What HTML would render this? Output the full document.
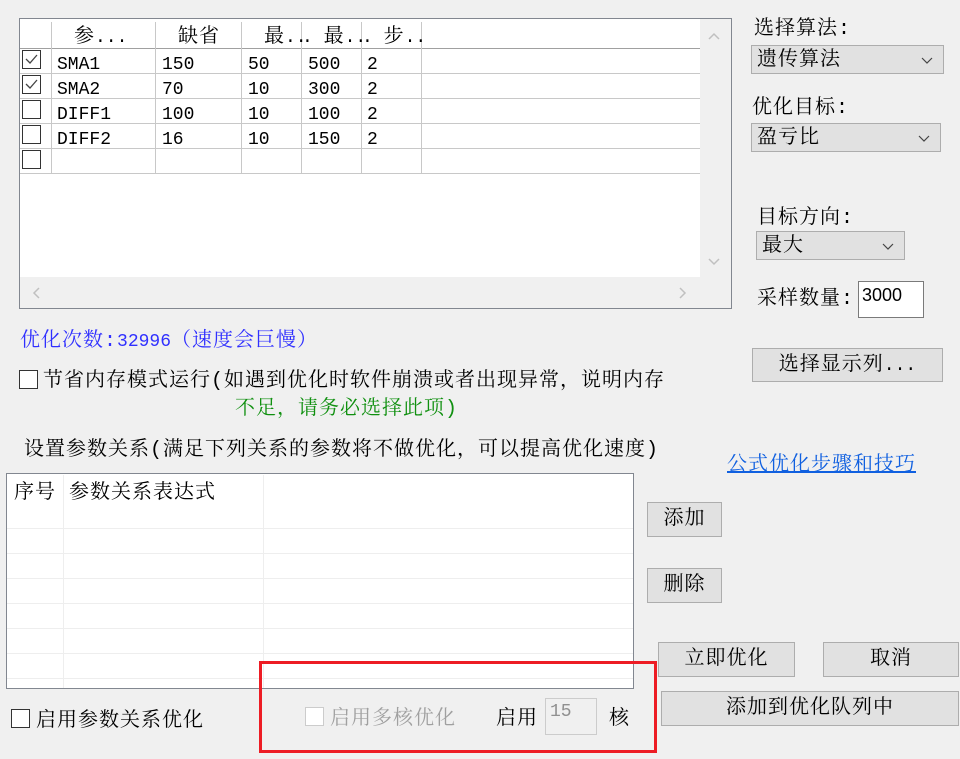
<!DOCTYPE html>
<html><head><meta charset="utf-8"><style>
*{box-sizing:border-box;margin:0;padding:0}
body{width:960px;height:759px;background:#f0f0f0;position:relative;overflow:hidden;font-family:"Liberation Mono","Noto Serif CJK SC",serif;font-size:20px;color:#000;letter-spacing:1px}
.a{position:absolute;white-space:nowrap;line-height:22px;margin-top:3px}
.g{font-size:18px;letter-spacing:0}
.btn{position:absolute;background:#e1e1e1;border:1px solid #adadad;text-align:center;font-size:20px;padding-top:3px}
.cb{position:absolute;width:19px;height:19px;border:1px solid #333;background:#fff}
.combo{position:absolute;background:#e1e1e1;border:1px solid #adadad;font-size:20px;padding-left:5px;padding-top:3px}
.combo svg{position:absolute;right:10px;top:11px}
.h{position:absolute;background:#c8c8c8}
</style></head><body>
<div style="position:absolute;left:19px;top:18px;width:713px;height:291px;border:1px solid #828790;background:#f0f0f0"></div>
<div style="position:absolute;left:20px;top:19px;width:680px;height:258px;background:#fff"></div>
<div class="h" style="left:20px;top:48px;width:680px;height:1px;background:#a0a0a0"></div>
<div class="h" style="left:20px;top:73px;width:680px;height:1px"></div>
<div class="h" style="left:20px;top:98px;width:680px;height:1px"></div>
<div class="h" style="left:20px;top:123px;width:680px;height:1px"></div>
<div class="h" style="left:20px;top:148px;width:680px;height:1px"></div>
<div class="h" style="left:20px;top:173px;width:680px;height:1px"></div>
<div class="h" style="left:51px;top:22px;width:1px;height:151px"></div>
<div class="h" style="left:155px;top:22px;width:1px;height:151px"></div>
<div class="h" style="left:241px;top:22px;width:1px;height:151px"></div>
<div class="h" style="left:301px;top:22px;width:1px;height:151px"></div>
<div class="h" style="left:361px;top:22px;width:1px;height:151px"></div>
<div class="h" style="left:421px;top:22px;width:1px;height:151px"></div>
<div class="a" style="left:74px;top:24px">参<span class="g">...</span></div>
<div class="a" style="left:178px;top:24px">缺省</div>
<div class="a" style="left:264px;top:24px">最<span class="g">..</span></div>
<div class="a" style="left:302px;top:24px"><span class="g">. </span>最<span class="g">..</span></div>
<div class="a" style="left:362px;top:24px"><span class="g">. </span>步<span class="g">..</span></div>
<div class="cb" style="left:22px;top:50px"><svg width="17" height="17"><polyline points="3,8 7,12 14,4" fill="none" stroke="#444" stroke-width="1.3"/></svg></div>
<div class="cb" style="left:22px;top:75px"><svg width="17" height="17"><polyline points="3,8 7,12 14,4" fill="none" stroke="#444" stroke-width="1.3"/></svg></div>
<div class="cb" style="left:22px;top:100px"></div>
<div class="cb" style="left:22px;top:125px"></div>
<div class="cb" style="left:22px;top:150px"></div>
<div class="a g" style="left:57px;top:51px">SMA1</div><div class="a g" style="left:162px;top:51px">150</div><div class="a g" style="left:248px;top:51px">50</div><div class="a g" style="left:308px;top:51px">500</div><div class="a g" style="left:367px;top:51px">2</div>
<div class="a g" style="left:57px;top:76px">SMA2</div><div class="a g" style="left:162px;top:76px">70</div><div class="a g" style="left:248px;top:76px">10</div><div class="a g" style="left:308px;top:76px">300</div><div class="a g" style="left:367px;top:76px">2</div>
<div class="a g" style="left:57px;top:101px">DIFF1</div><div class="a g" style="left:162px;top:101px">100</div><div class="a g" style="left:248px;top:101px">10</div><div class="a g" style="left:308px;top:101px">100</div><div class="a g" style="left:367px;top:101px">2</div>
<div class="a g" style="left:57px;top:126px">DIFF2</div><div class="a g" style="left:162px;top:126px">16</div><div class="a g" style="left:248px;top:126px">10</div><div class="a g" style="left:308px;top:126px">150</div><div class="a g" style="left:367px;top:126px">2</div>
<svg style="position:absolute;left:708px;top:32px" width="12" height="8"><polyline points="1,7 6,2 11,7" fill="none" stroke="#c0c0c0" stroke-width="1.5"/></svg>
<svg style="position:absolute;left:708px;top:258px" width="12" height="8"><polyline points="1,1 6,6 11,1" fill="none" stroke="#c0c0c0" stroke-width="1.5"/></svg>
<svg style="position:absolute;left:32px;top:287px" width="8" height="12"><polyline points="7,1 2,6 7,11" fill="none" stroke="#c0c0c0" stroke-width="1.5"/></svg>
<svg style="position:absolute;left:679px;top:287px" width="8" height="12"><polyline points="1,1 6,6 1,11" fill="none" stroke="#c0c0c0" stroke-width="1.5"/></svg>
<div class="a" style="left:754px;top:16px">选择算法:</div>
<div class="combo" style="left:751px;top:45px;width:193px;height:29px;line-height:24px">遗传算法<svg width="12" height="8"><polyline points="1,1 6,6 11,1" fill="none" stroke="#444" stroke-width="1.2"/></svg></div>
<div class="a" style="left:752px;top:95px">优化目标:</div>
<div class="combo" style="left:751px;top:123px;width:190px;height:29px;line-height:24px">盈亏比<svg width="12" height="8"><polyline points="1,1 6,6 11,1" fill="none" stroke="#444" stroke-width="1.2"/></svg></div>
<div class="a" style="left:757px;top:205px">目标方向:</div>
<div class="combo" style="left:756px;top:231px;width:149px;height:29px;line-height:24px">最大<svg width="12" height="8"><polyline points="1,1 6,6 11,1" fill="none" stroke="#444" stroke-width="1.2"/></svg></div>
<div class="a" style="left:757px;top:286px">采样数量:</div>
<div style="position:absolute;left:858px;top:281px;width:66px;height:37px;border:1px solid #7a7a7a;background:#fff;font-family:'Liberation Sans',sans-serif;font-size:18px;padding:3px 3px;letter-spacing:0">3000</div>
<div class="btn" style="left:752px;top:348px;width:191px;height:34px;line-height:28px">选择显示列<span class="g">...</span></div>
<div class="a" style="left:20px;top:328px;color:#3030ff">优化次数:<span class="g">32996</span>（速度会巨慢）</div>
<div class="cb" style="left:19px;top:370px"></div>
<div class="a" style="left:43px;top:368px">节省内存模式运行(如遇到优化时软件崩溃或者出现异常，说明内存</div>
<div class="a" style="left:235px;top:396px;color:#109010">不足，请务必选择此项)</div>
<div class="a" style="left:24px;top:437px">设置参数关系(满足下列关系的参数将不做优化，可以提高优化速度)</div>
<div class="a" style="left:727px;top:452px;color:#1060e0;text-decoration:underline">公式优化步骤和技巧</div>
<div style="position:absolute;left:6px;top:473px;width:628px;height:216px;border:1px solid #828790;background:#fff"></div>
<div class="h" style="left:7px;top:528px;width:626px;height:1px;background:#eee"></div>
<div class="h" style="left:7px;top:553px;width:626px;height:1px;background:#eee"></div>
<div class="h" style="left:7px;top:578px;width:626px;height:1px;background:#eee"></div>
<div class="h" style="left:7px;top:603px;width:626px;height:1px;background:#eee"></div>
<div class="h" style="left:7px;top:628px;width:626px;height:1px;background:#eee"></div>
<div class="h" style="left:7px;top:653px;width:626px;height:1px;background:#eee"></div>
<div class="h" style="left:7px;top:678px;width:626px;height:1px;background:#eee"></div>
<div class="h" style="left:63px;top:475px;width:1px;height:213px;background:#eee"></div>
<div class="h" style="left:263px;top:475px;width:1px;height:213px;background:#eee"></div>
<div class="a" style="left:14px;top:480px">序号</div>
<div class="a" style="left:69px;top:480px">参数关系表达式</div>
<div class="btn" style="left:647px;top:502px;width:75px;height:35px;line-height:28px">添加</div>
<div class="btn" style="left:647px;top:568px;width:75px;height:35px;line-height:28px">删除</div>
<div class="btn" style="left:658px;top:642px;width:137px;height:35px;line-height:28px">立即优化</div>
<div class="btn" style="left:823px;top:642px;width:136px;height:35px;line-height:28px">取消</div>
<div class="btn" style="left:661px;top:691px;width:298px;height:35px;line-height:28px">添加到优化队列中</div>
<div class="cb" style="left:11px;top:709px"></div>
<div class="a" style="left:36px;top:708px">启用参数关系优化</div>
<div class="cb" style="left:305px;top:707px;border-color:#ccc"></div>
<div class="a" style="left:330px;top:706px;color:#a0a0a0">启用多核优化</div>
<div class="a" style="left:496px;top:706px">启用</div>
<div style="position:absolute;left:545px;top:698px;width:52px;height:37px;border:1px solid #ccc;background:#f0f0f0;color:#909090;font-size:18px;padding:3px 4px;letter-spacing:0">15</div>
<div class="a" style="left:609px;top:706px">核</div>
<div style="position:absolute;left:259px;top:661px;width:398px;height:92px;border:3px solid #ed1c24"></div>
</body></html>
